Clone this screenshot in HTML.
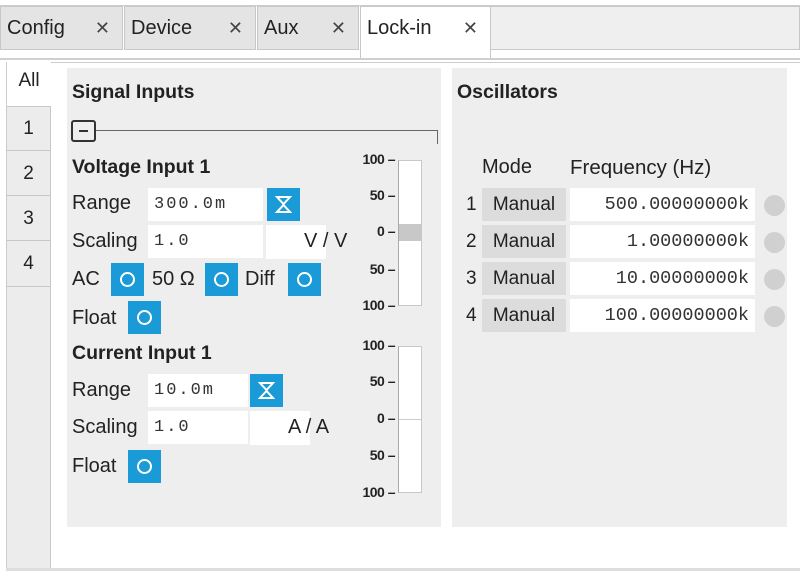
<!DOCTYPE html>
<html><head><meta charset="utf-8"><style>
*{margin:0;padding:0;box-sizing:border-box}
body{width:800px;height:573px;background:#fff;position:relative;overflow:hidden;font-family:"Liberation Sans",Arial,sans-serif;color:#222}
.a{position:absolute}
.tab{position:absolute;top:6px;height:44px;background:#e4e4e4;border:1px solid #c8c8c8;font-size:20px;line-height:42px;padding-left:6px}
.tab .x{position:absolute;right:12px;top:0;font-size:18px;color:#444}
.vt{position:absolute;left:7px;width:44px;background:#ececec;border-top:1px solid #c8c8c8;border-right:1px solid #c8c8c8;font-size:19px;text-align:center}
.lbl{position:absolute;font-size:20px;color:#222;white-space:nowrap}
.b{font-weight:bold;font-size:19.5px}
.in{position:absolute;background:#fff;font-family:"Liberation Mono",monospace;font-size:17px;letter-spacing:2px;color:#333;line-height:33px;padding-left:6px;height:33px}
.btn{position:absolute;width:33px;height:33px;background:#1a9ad6}
.btn i{position:absolute;left:9px;top:9px;width:15px;height:15px;border:2px solid #fff;border-radius:50%}
.hg{position:absolute;width:33px;height:33px;background:#1a9ad6}
.tk{position:absolute;font-size:14px;font-weight:bold;text-align:right;width:38px;color:#222;letter-spacing:-0.5px}
.mt{position:absolute;width:24px;border:1px solid #c8c8c8;border-left:1px solid #aaa;background:#fff}
.man{position:absolute;left:482px;width:84px;height:33px;background:#dcdcdc;font-size:19px;line-height:33px;text-align:center}
.fr{position:absolute;left:570px;width:185px;height:33px;background:#fff;font-family:"Liberation Mono",monospace;font-size:18.5px;line-height:33px;text-align:right;padding-right:6px;color:#333}
.led{position:absolute;left:764px;width:21px;height:21px;border-radius:50%;background:#d0d0d0}
.n{position:absolute;left:466px;font-size:19px;line-height:33px}
</style></head><body>
<div class="a" style="left:0;top:5px;width:800px;height:1px;background:#ccc"></div>
<div class="a" style="left:490px;top:6px;width:310px;height:44px;background:#efefef;border:1px solid #c8c8c8"></div>
<div class="tab" style="left:0;width:123px">Config<span class="x">✕</span></div>
<div class="tab" style="left:124px;width:132px">Device<span class="x">✕</span></div>
<div class="tab" style="left:257px;width:102px">Aux<span class="x">✕</span></div>
<div class="tab" style="left:360px;width:131px;background:#fff;border-bottom:none;height:52px">Lock-in<span class="x">✕</span></div>
<div class="a" style="left:0;top:58px;width:800px;height:2px;background:#d0d0d0"></div>
<div class="a" style="left:6px;top:62px;width:800px;height:508px;border:1px solid #ccc;border-right:none"></div>
<div class="vt" style="top:62px;height:44px;background:#fff;border-top:none;border-right:none;line-height:38px">All</div>
<div class="vt" style="top:106px;height:44px;line-height:44px">1</div>
<div class="vt" style="top:150px;height:45px;line-height:45px">2</div>
<div class="vt" style="top:195px;height:45px;line-height:45px">3</div>
<div class="vt" style="top:240px;height:46px;line-height:46px">4</div>
<div class="vt" style="top:286px;height:283px"></div>
<div class="a" style="left:6px;top:568px;width:800px;height:3px;background:#ddd"></div>

<div class="a" style="left:67px;top:68px;width:374px;height:459px;background:#eeeeee"></div>
<div class="a" style="left:452px;top:68px;width:335px;height:459px;background:#eeeeee"></div>

<div class="lbl b" style="left:72px;top:81px">Signal Inputs</div>
<div class="lbl b" style="left:457px;top:81px">Oscillators</div>
<div class="a" style="left:71px;top:120px;width:25px;height:22px;border:2px solid #333;border-radius:3px"><div class="a" style="left:6px;top:8px;width:9px;height:2px;background:#333"></div></div>
<div class="a" style="left:96px;top:130px;width:342px;height:1px;background:#666"></div>
<div class="a" style="left:437px;top:130px;width:1px;height:14px;background:#666"></div>

<div class="lbl b" style="left:72px;top:156px">Voltage Input 1</div>
<div class="lbl" style="left:72px;top:192px">Range</div>
<div class="in" style="left:148px;top:188px;width:115px">300.0m</div>
<div class="hg" style="left:267px;top:188px"><svg width="33" height="33"><path d="M10 9H23L16.5 16Z M10 24H23L16.5 17Z" fill="none" stroke="#fff" stroke-width="2"/></svg></div>
<div class="lbl" style="left:72px;top:230px">Scaling</div>
<div class="in" style="left:148px;top:225px;width:115px">1.0</div>
<div class="a" style="left:266px;top:225px;width:60px;height:34px;background:#fff"></div>
<div class="lbl" style="left:304px;top:230px">V / V</div>
<div class="lbl" style="left:72px;top:268px">AC</div>
<div class="btn" style="left:111px;top:263px"><i></i></div>
<div class="lbl" style="left:152px;top:268px">50 Ω</div>
<div class="btn" style="left:205px;top:263px"><i></i></div>
<div class="lbl" style="left:245px;top:268px">Diff</div>
<div class="btn" style="left:288px;top:263px"><i></i></div>
<div class="lbl" style="left:72px;top:307px">Float</div>
<div class="btn" style="left:128px;top:301px"><i></i></div>

<div class="lbl b" style="left:72px;top:342px">Current Input 1</div>
<div class="lbl" style="left:72px;top:379px">Range</div>
<div class="in" style="left:148px;top:374px;width:100px">10.0m</div>
<div class="hg" style="left:250px;top:374px"><svg width="33" height="33"><path d="M10 9H23L16.5 16Z M10 24H23L16.5 17Z" fill="none" stroke="#fff" stroke-width="2"/></svg></div>
<div class="lbl" style="left:72px;top:416px">Scaling</div>
<div class="in" style="left:148px;top:411px;width:100px">1.0</div>
<div class="a" style="left:250px;top:411px;width:60px;height:34px;background:#fff"></div>
<div class="lbl" style="left:288px;top:416px">A / A</div>
<div class="lbl" style="left:72px;top:455px">Float</div>
<div class="btn" style="left:128px;top:450px"><i></i></div>

<div class="mt" style="left:398px;top:160px;height:146px"><div class="a" style="left:0;top:63px;width:22px;height:17px;background:#c8c8c8"></div></div>
<div class="tk" style="left:357px;top:151px">100 –</div>
<div class="tk" style="left:357px;top:187px">50 –</div>
<div class="tk" style="left:357px;top:223px">0 –</div>
<div class="tk" style="left:357px;top:261px">50 –</div>
<div class="tk" style="left:357px;top:297px">100 –</div>
<div class="mt" style="left:398px;top:346px;height:147px"><div class="a" style="left:0;top:72px;width:22px;height:1px;background:#ccc"></div></div>
<div class="tk" style="left:357px;top:337px">100 –</div>
<div class="tk" style="left:357px;top:373px">50 –</div>
<div class="tk" style="left:357px;top:410px">0 –</div>
<div class="tk" style="left:357px;top:447px">50 –</div>
<div class="tk" style="left:357px;top:484px">100 –</div>

<div class="lbl" style="left:482px;top:156px">Mode</div>
<div class="lbl" style="left:570px;top:156px;font-size:20.5px">Frequency (Hz)</div>
<div class="n" style="top:188px">1</div><div class="man" style="top:188px">Manual</div><div class="fr" style="top:188px">500.00000000k</div><div class="led" style="top:195px"></div>
<div class="n" style="top:225px">2</div><div class="man" style="top:225px">Manual</div><div class="fr" style="top:225px">1.00000000k</div><div class="led" style="top:232px"></div>
<div class="n" style="top:262px">3</div><div class="man" style="top:262px">Manual</div><div class="fr" style="top:262px">10.00000000k</div><div class="led" style="top:269px"></div>
<div class="n" style="top:299px">4</div><div class="man" style="top:299px">Manual</div><div class="fr" style="top:299px">100.00000000k</div><div class="led" style="top:306px"></div>
</body></html>
